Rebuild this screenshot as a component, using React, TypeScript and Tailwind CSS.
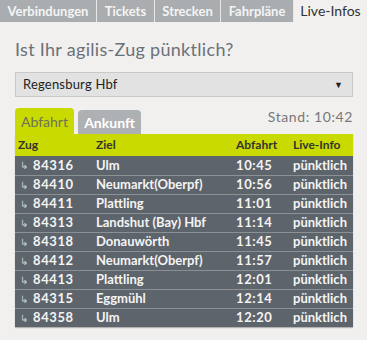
import React from "react";

const navTabs = [
  { label: "Verbindungen", w: "w-[96px]" },
  { label: "Tickets", w: "w-[57px]" },
  { label: "Strecken", w: "w-[65px]" },
  { label: "Fahrpläne", w: "w-[72px]" },
];

const rows = [
  ["84316", "Ulm", "10:45"],
  ["84410", "Neumarkt(Oberpf)", "10:56"],
  ["84411", "Plattling", "11:01"],
  ["84313", "Landshut (Bay) Hbf", "11:14"],
  ["84318", "Donauwörth", "11:45"],
  ["84412", "Neumarkt(Oberpf)", "11:57"],
  ["84413", "Plattling", "12:01"],
  ["84315", "Eggmühl", "12:14"],
  ["84358", "Ulm", "12:20"],
];

const App = () => {
  return (
    <div className="w-[367px] h-[340px] bg-[#f1f0ef] font-['Lato',sans-serif] overflow-hidden">
      {/* top nav */}
      <div className="flex h-[22px] gap-[1px] bg-[#e8e8e8]">
        {navTabs.map((t) => (
          <div
            key={t.label}
            className={`${t.w} bg-[#a9adb0] text-[#f4f4f4] text-[13px] font-bold flex items-center justify-center leading-none`}
          >
            {t.label}
          </div>
        ))}
        <div className="flex-1 bg-[#f1f0ef] text-[#333] text-[14px] flex items-center justify-center leading-none">
          Live-Infos
        </div>
      </div>

      <div className="px-[15px]">
        <h1 className="text-[18px] text-[#6c7179] mt-[15px] leading-[24px] tracking-[0.3px]">
          Ist Ihr agilis-Zug pünktlich?
        </h1>

        {/* station select */}
        <div className="mt-[11px] h-[25px] w-[338px] bg-[#e2e2e2] border border-[#c9c9c9] flex items-center justify-between pl-[7px] pr-[9px]">
          <span className="text-[13px] text-[#222] tracking-[0.2px]">Regensburg Hbf</span>
          <span className="text-[9px] text-[#222]">▼</span>
        </div>

        {/* tabs */}
        <div className="mt-[11px] flex items-end w-[338px]">
          <div className="w-[59px] h-[26px] bg-[#c9da00] rounded-t-[4px] flex items-center justify-center text-[14px] text-[#6c735a]">
            Abfahrt
          </div>
          <div className="ml-[4px] w-[63px] h-[24px] bg-[#aeb1b3] rounded-t-[4px] flex items-center justify-center text-[14px] font-bold text-white">
            Ankunft
          </div>
          <div className="flex-1 self-start text-right text-[14px] text-[#777] leading-[18px] tracking-[0.6px]">
            Stand: 10:42
          </div>
        </div>

        {/* table */}
        <div className="w-[338px] shadow-[0_1px_1px_rgba(0,0,0,0.25)]">
          <div className="h-[22px] bg-[#c9da00] flex items-center text-[12px] font-bold text-[#333]">
            <div className="w-[81px] pl-[3px]">Zug</div>
            <div className="w-[140px]">Ziel</div>
            <div className="w-[57px]">Abfahrt</div>
            <div className="flex-1">Live-Info</div>
          </div>
          {rows.map((r, i) => (
            <div
              key={r[0] + i}
              className={`h-[19px] bg-[#5e646b] flex items-center text-[13px] font-bold text-[#f4f4f4] ${
                i > 0 ? "border-t border-[#8c9196]" : ""
              }`}
            >
              <div className="w-[81px] pl-[5px] flex items-center">
                <span className="text-[10px] text-[#c8cbce] font-normal w-[13px]">↳</span>
                <span className="tracking-[0.6px]">{r[0]}</span>
              </div>
              <div className="w-[140px]">{r[1]}</div>
              <div className="w-[57px] tracking-[0.6px]">{r[2]}</div>
              <div className="flex-1">pünktlich</div>
            </div>
          ))}
        </div>
      </div>
    </div>
  );
};

export default App;
